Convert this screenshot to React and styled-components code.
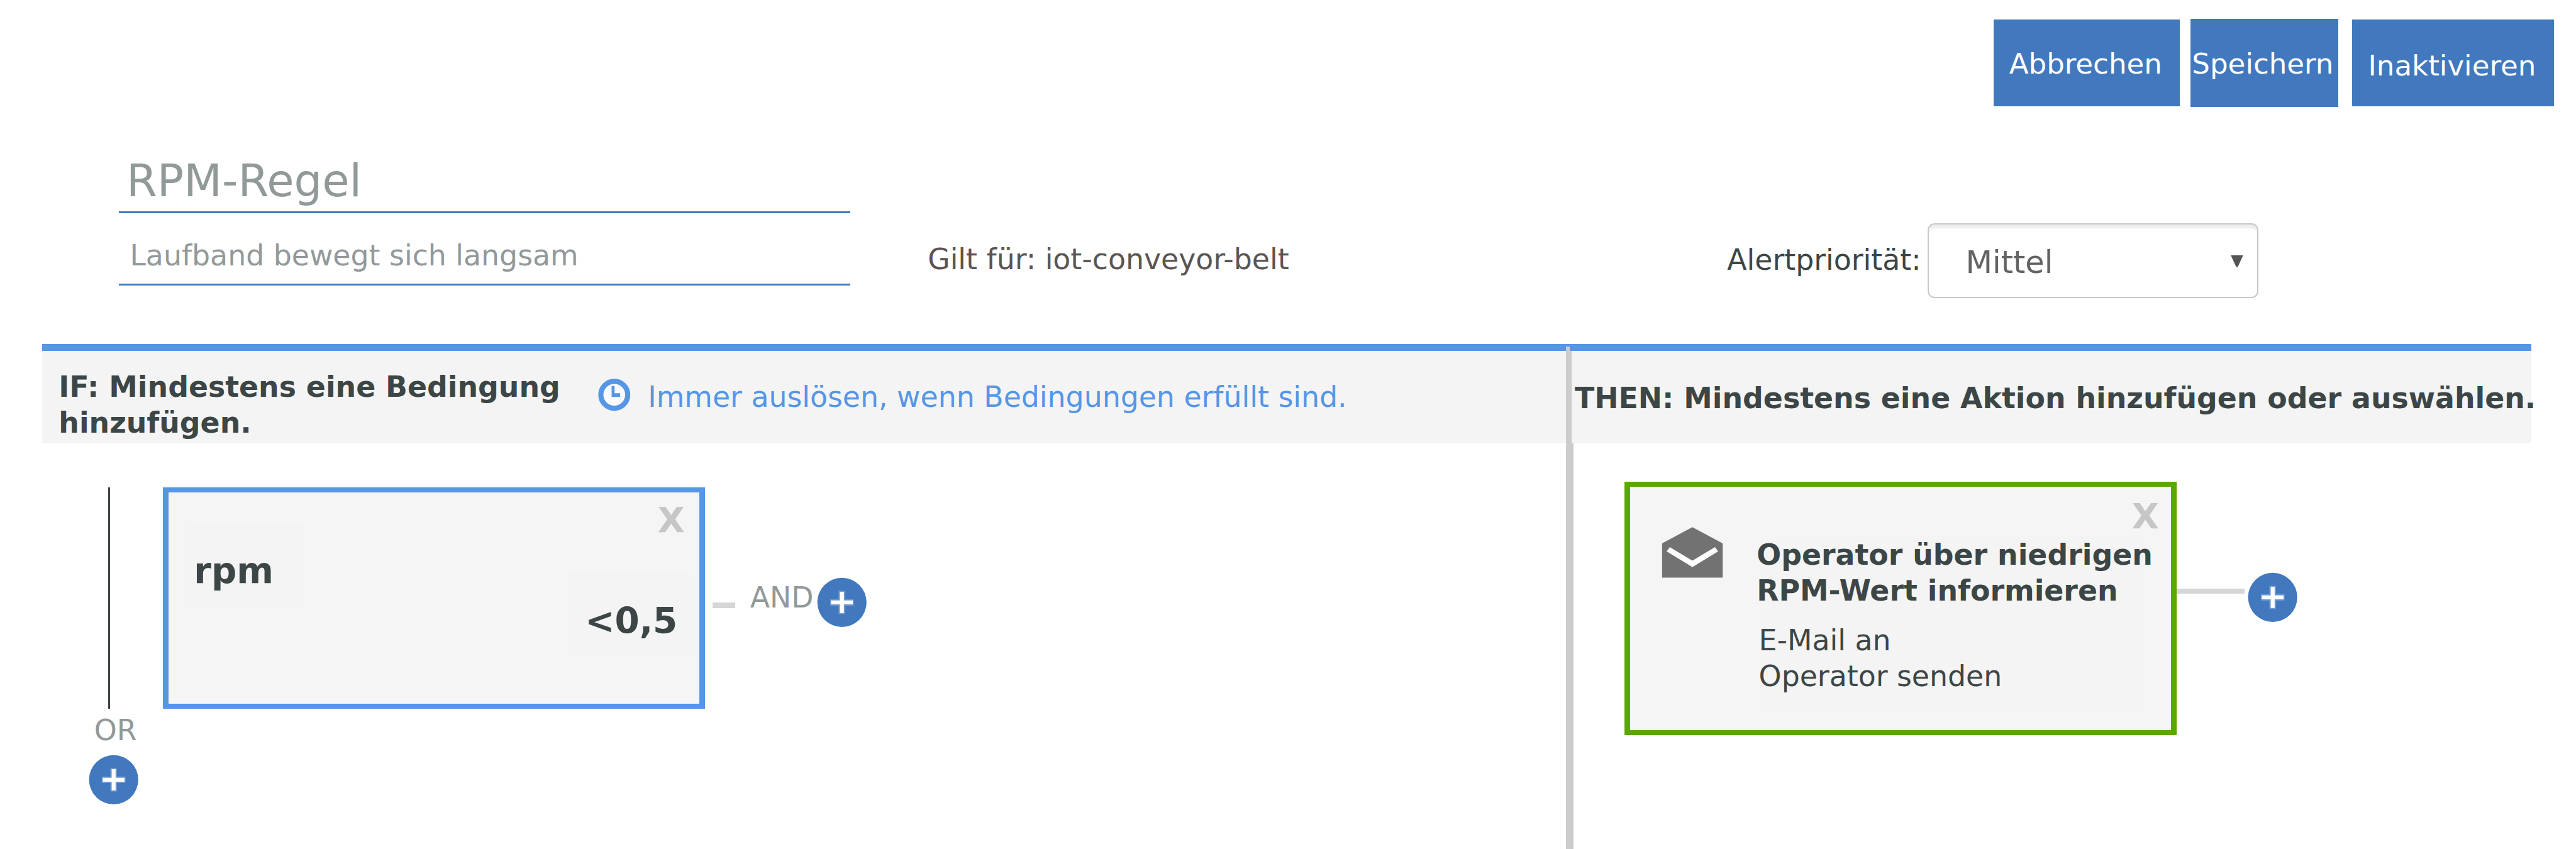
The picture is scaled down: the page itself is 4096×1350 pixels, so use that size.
import React from "react";
import styled, { createGlobalStyle } from "styled-components";

/* Design units to screen pixels. */
const u = (n) => `${Math.round(n * 84.515) / 100}px`;

const color = {
  action: "#4178be",
  accent: "#5596e6",
  success: "#5aa700",
  ink: "#3c4646",
  muted: "#919999",
  panel: "#f5f5f5",
  field: "#f4f4f4",
  rule: "#cccccc",
  connector: "#d6d6d6",
};

const GlobalStyle = createGlobalStyle`
  *, *::before, *::after { box-sizing: border-box; }
  html, body { margin: 0; padding: 0; background: #fff; overflow: hidden; }
  body { font-family: "DejaVu Sans", sans-serif; color: ${color.ink}; }
`;

const Page = styled.div`
  width: 4096px;
  height: 1350px;
  display: flex;
  flex-direction: column;
  overflow: hidden;
`;

const Text = styled.div`
  flex: none;
  font-size: ${(p) => u(p.$size || 54.17)};
  line-height: ${(p) => u(p.$line || 64)};
  font-weight: ${(p) => (p.$bold ? 700 : 400)};
  color: ${(p) => p.$color || color.ink};
  margin: ${(p) => u(p.$top || 0)} 0 0 ${(p) => u(p.$left || 0)};
  width: ${(p) => (p.$width ? u(p.$width) : "auto")};
  white-space: ${(p) => (p.$wrap ? "normal" : "nowrap")};
`;

/* Toolbar */

const Toolbar = styled.header`
  flex: none;
  height: ${u(205)};
  display: flex;
  justify-content: flex-end;
  align-items: flex-start;
  padding: ${u(35)} ${u(41)} 0 0;
`;

const Button = styled.button`
  flex: none;
  width: ${(p) => u(p.$width)};
  height: ${(p) => u(p.$height)};
  margin: ${(p) => u(p.$top || 0)} 0 0 ${(p) => u(p.$gap || 0)};
  padding: ${(p) => u(p.$padTop)} 0 0 ${(p) => u(p.$padLeft)};
  display: flex;
  align-items: flex-start;
  border: 0;
  background: ${color.action};
  font-family: inherit;
`;

/* Rule details */

const Details = styled.section`
  flex: none;
  height: ${u(442)};
  display: flex;
  align-items: flex-start;
  padding-left: ${u(223.4)};
`;

const Names = styled.div`
  flex: none;
  width: ${u(1376.4)};
`;

const NameField = styled.div`
  padding: ${(p) => p.$pad};
  border-bottom: 3px solid ${color.action};
`;

const Select = styled.div`
  flex: none;
  width: ${u(622)};
  height: ${u(140)};
  margin-top: ${u(215.3)};
  display: flex;
  justify-content: space-between;
  align-items: flex-start;
  padding-right: ${u(26.5)};
  border: 2.6px solid #c8c8c8;
  border-radius: ${u(13)};
  background: #fff;
  box-shadow: inset 0 7px 3px -1px rgba(0, 0, 0, 0.07);
`;

const Arrow = styled.svg`
  flex: none;
  width: ${u(23.5)};
  height: ${u(23)};
  margin-top: ${u(57.5)};
`;

/* Board */

const Board = styled.main`
  flex: none;
  width: ${u(4683)};
  height: ${u(950)};
  margin-left: ${u(79.8)};
  display: flex;
  flex-direction: column;
`;

const BoardHeader = styled.div`
  position: relative;
  flex: none;
  height: ${u(187)};
  display: flex;
  border-top: ${u(13.7)} solid ${color.accent};
  background: ${color.field};
`;

const BoardBody = styled.div`
  flex: 1;
  display: flex;
`;

const HeaderCell = styled.div`
  flex: none;
  width: ${(p) => (p.$width ? u(p.$width) : "auto")};
  display: flex;
  align-items: flex-start;
`;

const Divider = styled.div`
  flex: none;
  width: ${(p) => u(p.$width)};
  background: ${color.rule};
`;

const DividerCap = styled.div`
  position: absolute;
  left: ${u(2866.6)};
  top: ${u(-7.5)};
  width: ${u(6.8)};
  height: ${u(8)};
  background: ${color.rule};
`;

const Clock = styled.svg`
  flex: none;
  width: ${u(61)};
  height: ${u(61)};
  margin-top: ${u(52.6)};
`;

const Pane = styled.section`
  flex: none;
  width: ${(p) => (p.$width ? u(p.$width) : "auto")};
  display: flex;
  align-items: flex-start;
`;

const OrLane = styled.div`
  flex: none;
  width: ${u(227.2)};
  display: flex;
  flex-direction: column;
  align-items: flex-start;
`;

const OrLine = styled.div`
  width: 3px;
  height: ${u(416.7)};
  margin: ${u(83)} 0 0 ${u(124.1)};
  background: #3f4444;
`;

const Card = styled.article`
  position: relative;
  flex: none;
  width: ${(p) => u(p.$width)};
  height: ${(p) => u(p.$height)};
  margin: ${(p) => u(p.$top)} 0 0 ${(p) => u(p.$left || 0)};
  display: flex;
  justify-content: ${(p) => p.$justify || "flex-start"};
  align-items: flex-start;
  border-style: solid;
  border-width: 8px 9px;
  border-color: ${(p) => p.$color};
  background: ${color.panel};
`;

const Close = styled.span`
  position: absolute;
  top: ${(p) => u(p.$top)};
  right: ${(p) => u(p.$right)};
  font-size: ${u(66)};
  line-height: ${u(66)};
  font-weight: 700;
  color: #c6c6c6;
`;

const Value = styled.div`
  flex: none;
  width: ${(p) => u(p.$width)};
  height: ${(p) => u(p.$height)};
  margin: ${(p) => `${u(p.$top)} ${u(p.$right || 0)} 0 ${u(p.$left || 0)}`};
  display: flex;
  flex-direction: ${(p) => (p.$column ? "column" : "row")};
  align-items: flex-start;
  background: ${color.field};
`;

const Connector = styled.div`
  flex: none;
  width: ${(p) => u(p.$width)};
  height: ${u(10)};
  margin: ${(p) => u(p.$top)} 0 0 ${(p) => u(p.$left || 0)};
  background: ${color.connector};
`;

const AddIcon = styled.svg`
  flex: none;
  width: ${u(94)};
  height: ${u(94.3)};
  margin: ${(p) => u(p.$top)} 0 0 ${(p) => u(p.$left || 0)};
`;

const Envelope = styled.svg`
  flex: none;
  width: ${u(116)};
  height: ${u(99)};
  margin: ${u(74)} ${u(0.8)} 0 ${u(59.7)};
`;

function Add({ top, left }) {
  return (
    <AddIcon viewBox="0 0 94 94" $top={top} $left={left}>
      <circle cx="47" cy="47" r="46.3" fill={color.action} />
      <path d="M40.7 25h12.6v16h16v12h-16v16h-12.6v-16h-16v-12h16z" fill="#6f99cf" />
      <path d="M43.3 27h7.4v16.3h16.8v7.4h-16.8v16.3h-7.4v-16.3h-16.8v-7.4h16.8z" fill="#fff" />
    </AddIcon>
  );
}

export default function App() {
  return (
    <Page>
      <GlobalStyle />
      <Toolbar>
        <Button $width={350.4} $height={163} $top={2.2} $padLeft={29.4} $padTop={52.1}>
          <Text $size={53.4} $color="#fff">Abbrechen</Text>
        </Button>
        <Button $width={278} $height={166.6} $gap={20} $padLeft={3} $padTop={54.3}>
          <Text $size={53.4} $color="#fff">Speichern</Text>
        </Button>
        <Button $width={380.3} $height={163} $top={2.2} $gap={26.3} $padLeft={30.2} $padTop={54.9}>
          <Text $size={53.4} $color="#fff">Inaktivieren</Text>
        </Button>
      </Toolbar>

      <Details>
        <Names>
          <NameField $pad={`${u(85.8)} 0 ${u(6.5)} ${u(14.3)}`}>
            <Text $size={83.33} $line={100} $color={color.muted}>RPM-Regel</Text>
          </NameField>
          <NameField $pad={`${u(49)} 0 ${u(19.9)} ${u(20.8)}`}>
            <Text $color={color.muted}>Laufband bewegt sich langsam</Text>
          </NameField>
        </Names>
        <Text $left={145.7} $top={251.3} $width={1504} $color="#5a5552">
          Gilt für: iot-conveyor-belt
        </Text>
        <Text $top={252.9} $width={377.5}>Alertpriorität:</Text>
        <Select>
          <Text $size={58.33} $line={70} $left={68.8} $top={36.8} $color="#636363">Mittel</Text>
          <Arrow viewBox="0 0 23 23">
            <path d="M0 0h23L13 22h-3z" fill="#555" />
          </Arrow>
        </Select>
      </Details>

      <Board>
        <BoardHeader>
          <HeaderCell $width={2866.6}>
            <Text $bold $wrap $line={67.4} $left={30.6} $top={35.3} $width={1014.8}>
              IF: Mindestens eine Bedingung hinzufügen.
            </Text>
            <Clock viewBox="0 0 61 61">
              <circle cx="30.5" cy="30.5" r="25.3" fill="#f9fafd" stroke={color.accent} strokeWidth="9.6" />
              <path d="M25.5 14h5.5v13.5h10.500v7h-16z" fill={color.accent} />
            </Clock>
            <Text $color={color.accent} $left={32.8} $top={55.7}>
              Immer auslösen, wenn Bedingungen erfüllt sind.
            </Text>
          </HeaderCell>
          <Divider $width={10.4} />
          <HeaderCell>
            <Text $bold $left={6} $top={57.7}>
              THEN: Mindestens eine Aktion hinzufügen oder auswählen.
            </Text>
          </HeaderCell>
          <DividerCap />
        </BoardHeader>

        <BoardBody>
          <Pane $width={2866.6}>
            <OrLane>
              <OrLine />
              <Text $left={97.3} $top={8.8} $color={color.muted}>OR</Text>
              <Add top={13.7} left={87.4} />
            </OrLane>
            <Card $width={1019.5} $height={416.7} $top={83} $justify="space-between" $color={color.accent}>
              <Value $width={226.4} $height={155.7} $left={30.1} $top={60.2}>
                <Text $bold $size={66.67} $line={80} $left={17} $top={47.9}>rpm</Text>
              </Value>
              <Value $width={230.5} $height={155.7} $right={17} $top={149.9}>
                <Text $bold $size={66.67} $line={80} $left={32.3} $top={51.9}>{"<0,5"}</Text>
              </Value>
              <Close $top={18.8} $right={27.5}>X</Close>
            </Card>
            <Connector $width={43.5} $left={13.7} $top={300} />
            <Text $left={27.7} $top={259.2} $width={125.2} $color={color.muted}>AND</Text>
            <Add top={252.7} />
          </Pane>
          <Divider $width={13.6} />
          <Pane>
            <Card $width={1039.6} $height={476.9} $top={72.9} $left={96.1} $color={color.success}>
              <Envelope viewBox="0 0 116 99">
                <path d="M58 1.5L115 32V96.500H1V32Z" fill="#727272" />
                <path d="M15.5 39L58 64.5L100.5 39L106.5 47L58 76.5L9.5 47Z" fill="#fff" />
              </Envelope>
              <Value $column $width={716} $height={326.6} $left={71.6} $top={91.1}>
                <Text $bold $line={67.6} $left={-9.8} $top={2.7}>
                  Operator über niedrigen
                  <br />
                  RPM-Wert informieren
                </Text>
                <Text $line={67.5} $left={-5.8} $top={26.3}>
                  E-Mail an
                  <br />
                  Operator senden
                </Text>
              </Value>
              <Close $top={21.8} $right={23.4}>X</Close>
            </Card>
            <Connector $width={127} $top={273} />
            <Add top={242.6} left={6.6} />
          </Pane>
        </BoardBody>
      </Board>
    </Page>
  );
}
